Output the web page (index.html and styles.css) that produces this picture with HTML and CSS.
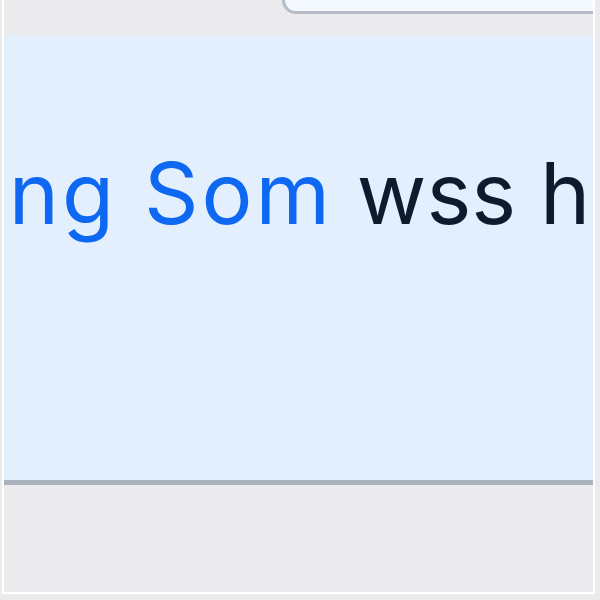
FILE: index.html
```html
<!DOCTYPE html>
<html>
<head>
<meta charset="utf-8">
<link rel="stylesheet" href="styles.css">
</head>
<body>
<div class="frame">
  <div class="topbar">
    <div class="tab"></div>
  </div>
  <div class="panel">
    <p class="line"><span class="name">ang Som</span> wss h</p>
  </div>
</div>
</body>
</html>
```
FILE: styles.css
```css
html, body {
  margin: 0;
  padding: 0;
  background: #ebebed;
  width: 600px;
  height: 600px;
  overflow: hidden;
}
.frame {
  margin-left: 2px;
  width: 593px;
  height: 594px;
  border-left: 2px solid #ffffff;
  border-right: 2px solid #ffffff;
  border-bottom: 2px solid #ffffff;
  box-sizing: border-box;
  display: flex;
  flex-direction: column;
}
.topbar {
  height: 35px;
  display: flex;
  background: #ebebed;
}
.tab {
  margin-left: 278px;
  flex: 1;
  height: 14px;
  background: #f4f9ff;
  border-left: 3px solid #b6bdc7;
  border-bottom: 3px solid #b6bdc7;
  border-bottom-left-radius: 28px;
  box-sizing: border-box;
}
.panel {
  height: 450px;
  background: #e3effd;
  border-bottom: 5px solid #aab3bd;
  box-sizing: border-box;
  overflow: hidden;
}
.line {
  margin: 0;
  padding-top: 104px;
  margin-left: -46px;
  font-family: Inter, "Noto Sans", sans-serif;
  font-size: 85px;
  line-height: 110px;
  color: #0e1a2e;
  white-space: nowrap;
}
.name {
  color: #0f68f2;
  letter-spacing: 3px;
}
```
